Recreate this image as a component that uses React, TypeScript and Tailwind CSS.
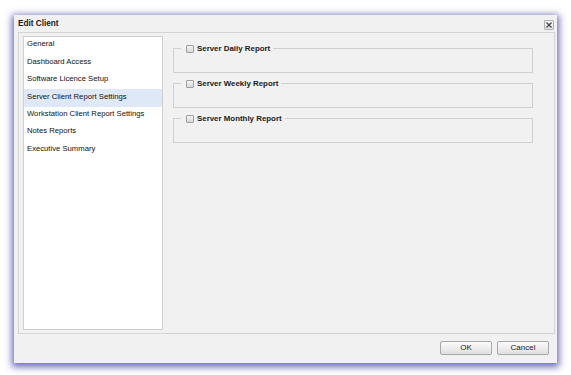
import React from "react";

const items = [
  "General",
  "Dashboard Access",
  "Software Licence Setup",
  "Server Client Report Settings",
  "Workstation Client Report Settings",
  "Notes Reports",
  "Executive Summary",
];

const reports = ["Server Daily Report", "Server Weekly Report", "Server Monthly Report"];

function Check() {
  return (
    <span className="inline-block w-[8px] h-[8px] border border-[#a0a0a0] rounded-[1px] bg-gradient-to-b from-[#f4f4f4] to-[#d8d8d8] shrink-0" />
  );
}

function ReportBox({ label }: { label: string }) {
  return (
    <fieldset className="border border-[#d0d0d0] h-[29px] pl-[7px] w-[360px]">
      <legend className="flex items-center gap-[3px] pl-[5px] pr-[3px] h-[9px]">
        <Check />
        <span className="text-[7.9px] font-bold text-[#1a1a1a] leading-[9px]">{label}</span>
      </legend>
    </fieldset>
  );
}

export default function App() {
  return (
    <div
      className="w-[571px] h-[375px] bg-white pt-[15px] pl-[14px]"
      style={{ fontFamily: '"Liberation Sans", Arial, sans-serif' }}
    >
      <div className="w-[543px] h-[348px] bg-[#f1f1f1] shadow-[0_2px_7px_2px_rgba(80,80,170,0.85)] flex flex-col">
        {/* title bar */}
        <div className="h-[17px] flex items-center justify-between pl-[4px] pr-[3px] pt-[2px]">
          <span className="text-[8.2px] font-bold text-[#1a1a1a]">Edit Client</span>
          <span className="w-[10px] h-[10px] mt-[1px] border border-[#b0b0b0] rounded-[1px] bg-gradient-to-b from-[#fafafa] to-[#e2e2e2] flex items-center justify-center">
            <svg width="6" height="6" viewBox="0 0 6 6">
              <path d="M0.5 0.5 L5.5 5.5 M5.5 0.5 L0.5 5.5" stroke="#444" strokeWidth="1.3" />
            </svg>
          </span>
        </div>

        {/* body */}
        <div className="ml-[4px] w-[537px] h-[302px] border border-[#d4d4d4] flex px-[4px] py-[3px]">
          <div className="w-[140px] h-full bg-white border border-[#cfcfcf] flex flex-col">
            {items.map((t, i) => (
              <div
                key={t}
                className={
                  "h-[17.4px] flex items-center pl-[3px] pb-[3px] text-[7.7px] text-[#111]" +
                  (i === 3 ? " bg-[#dfe8f6]" : "")
                }
              >
                {t}
              </div>
            ))}
          </div>
          <div className="flex flex-col gap-[6px] pl-[10px] pt-[8px]">
            {reports.map((r) => (
              <ReportBox key={r} label={r} />
            ))}
          </div>
        </div>

        {/* footer */}
        <div className="flex justify-end gap-[5px] pt-[7px] pr-[8px]">
          <button className="w-[52px] h-[14px] border border-[#a8a8a8] rounded-[2px] bg-gradient-to-b from-[#fbfbfb] to-[#e0e0e0] text-[8px] font-medium text-[#222] leading-none">
            OK
          </button>
          <button className="w-[52px] h-[14px] border border-[#a8a8a8] rounded-[2px] bg-gradient-to-b from-[#fbfbfb] to-[#e0e0e0] text-[8px] font-medium text-[#222] leading-none">
            Cancel
          </button>
        </div>
      </div>
    </div>
  );
}
